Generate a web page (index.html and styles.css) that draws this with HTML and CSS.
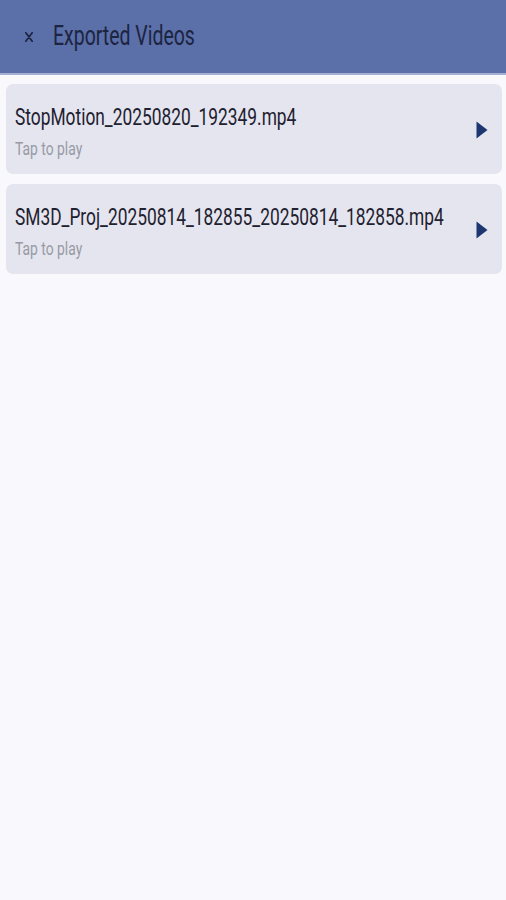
FILE: index.html
```html
<!DOCTYPE html>
<html>
<head>
<meta charset="utf-8">
<link rel="stylesheet" href="styles.css">
</head>
<body>
<header class="appbar">
  <svg class="close" width="8" height="10" viewBox="0 0 8 10"><path d="M0.8 0.8 L7.2 9.2 M7.2 0.8 L0.8 9.2" stroke="#1c2440" stroke-width="1.7" stroke-linecap="round" fill="none"/></svg>
  <span class="title"><span class="sq">Exported Videos</span></span>
</header>
<main class="list">
  <div class="card">
    <div class="info">
      <div class="name"><span class="sq">StopMotion_20250820_192349.mp4</span></div>
      <div class="sub"><span class="sq">Tap to play</span></div>
    </div>
    <svg class="play" width="12" height="18" viewBox="0 0 12 18"><path d="M0.5 0.5 L11.5 9 L0.5 17.5 Z" fill="#1d3670"/></svg>
  </div>
  <div class="card">
    <div class="info">
      <div class="name"><span class="sq">SM3D_Proj_20250814_182855_20250814_182858.mp4</span></div>
      <div class="sub"><span class="sq">Tap to play</span></div>
    </div>
    <svg class="play" width="12" height="18" viewBox="0 0 12 18"><path d="M0.5 0.5 L11.5 9 L0.5 17.5 Z" fill="#1d3670"/></svg>
  </div>
</main>
</body>
</html>
```
FILE: styles.css
```css
html, body {
  margin: 0;
  padding: 0;
  background: #f8f8fd;
  font-family: "Roboto", "Liberation Sans", sans-serif;
}
.sq {
  display: inline-block;
  white-space: nowrap;
  transform-origin: 0 50%;
  transform: scaleX(0.72);
}
.appbar {
  height: 75px;
  background: #5b6fa9;
  border-bottom: 2px solid #a3afd3;
  display: flex;
  align-items: flex-start;
  padding: 20px 0 0 25px;
  box-sizing: border-box;
  color: #1c2440;
}
.close {
  display: block;
  flex: none;
  margin-top: 12px;
  margin-right: 20px;
}
.title {
  font-size: 28px;
  line-height: 32px;
  white-space: nowrap;
}
.title .sq {
  transform: scaleX(0.695);
}
.list {
  padding: 9px 4px 0 6px;
  display: flex;
  flex-direction: column;
  gap: 10px;
}
.card {
  height: 90px;
  background: #e4e5ee;
  border-radius: 7px;
  display: flex;
  align-items: flex-start;
  padding: 19px 14px 0 9px;
  box-sizing: border-box;
  overflow: hidden;
}
.info {
  flex: 1;
  min-width: 0;
}
.name {
  font-size: 24px;
  line-height: 28px;
  color: #1f2130;
}
.name .sq {
  transform: scaleX(0.723);
}
.sub {
  font-size: 19px;
  line-height: 22px;
  color: #979aa5;
  margin-top: 7px;
}
.sub .sq {
  transform: scaleX(0.73);
}
.play {
  display: block;
  flex: none;
  margin-top: 18px;
}
```
